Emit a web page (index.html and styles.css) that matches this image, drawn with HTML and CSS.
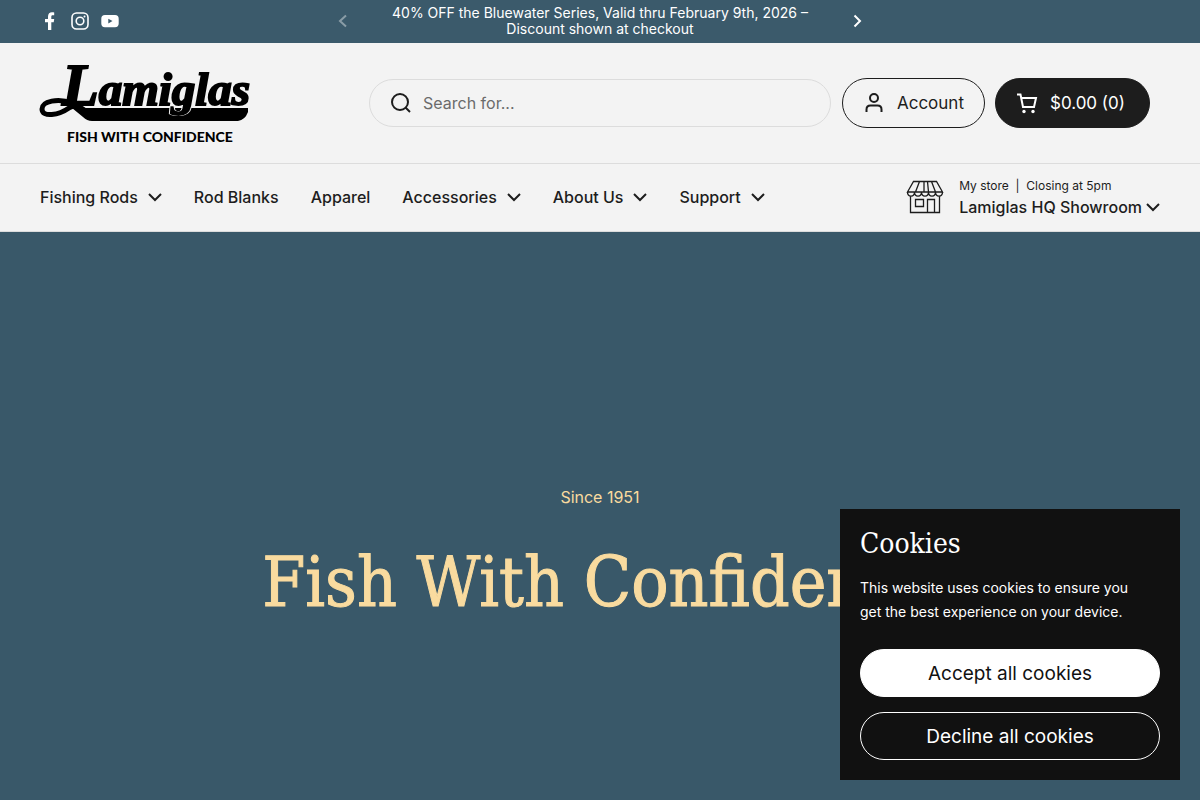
FILE: index.html
```html
<!DOCTYPE html>
<html lang="en">
<head>
    <meta charset="UTF-8">
    <meta name="viewport" content="width=device-width, initial-scale=1.0">
    <title>Lamiglas</title>
    <link rel="stylesheet" href="styles.css">
</head>
<body>
    <div class="announcement-bar">
        <div class="social">
            <a href="#" aria-label="Facebook">
                <svg width="20" height="20" viewBox="0 0 20 20" fill="currentColor"><path d="M8 19v-7.800H5V8h3V5.500C8 2.600 9.600 1.200 12 1.200c1 0 1.700.1 2.200.2v2.900h-1.600c-1 0-1.300.6-1.300 1.500V8h2.900l-.5 3.200h-2.400V19z"/></svg>
            </a>
            <a href="#" aria-label="Instagram">
                <svg width="20" height="20" viewBox="0 0 20 20" fill="none" stroke="currentColor" stroke-width="1.600"><rect x="2" y="2" width="16" height="16" rx="4.500"/><circle cx="10" cy="10" r="3.800"/><circle cx="14.500" cy="5.500" r="1" fill="currentColor" stroke="none"/></svg>
            </a>
            <a href="#" aria-label="YouTube">
                <svg width="20" height="20" viewBox="0 0 20 20" fill="currentColor"><path fill-rule="evenodd" d="M5 4h10c2.500 0 3.700 1.300 3.700 3.700v4.800c0 2.400-1.200 3.700-3.700 3.700H5c-2.500 0-3.700-1.300-3.700-3.700V7.700C1.300 5.300 2.500 4 5 4zm3.300 3.800v4.600l4.200-2.300z"/></svg>
            </a>
        </div>
        <div class="announcement">
            <button class="arrow" aria-label="Previous" disabled>
                <svg width="14" height="14" viewBox="0 0 14 14"><path d="M10 1.500L4 7l6 5.500"/></svg>
            </button>
            <p>40% OFF the Bluewater Series, Valid thru February 9th, 2026 – Discount shown at checkout</p>
            <button class="arrow" aria-label="Next">
                <svg width="14" height="14" viewBox="0 0 14 14"><path d="M4.500 1.500L10 7l-5.500 5.500"/></svg>
            </button>
        </div>
    </div>

    <header>
        <div class="header-top">
            <a href="#" class="logo">
                <svg width="210" height="82" viewBox="0 0 210 82">
                    <path d="M32 46H208v4q-3 8-10 9H52q-5 0-9-4z"/>
                    <text class="script" x="22" y="43"><tspan class="initial">L</tspan>amiglas</text>
                    <path class="swash" d="M32 41C18 36 2 39 2 47c0 9 17 6 27-1 8-5 14 1 21 6"/>
                    <text class="tagline" x="27" y="80">FISH WITH CONFIDENCE</text>
                </svg>
            </a>
            <form class="search">
                <svg width="22" height="22" viewBox="0 0 22 22"><circle cx="10" cy="10" r="8"/><path d="M15.500 15.500L20 20"/></svg>
                <input type="search" aria-label="Search" placeholder="Search for...">
            </form>
            <a href="#" class="pill account">
                <svg width="22" height="22" viewBox="0 0 22 22"><circle cx="11" cy="6" r="4"/><path d="M3.500 20v-2.500c0-2.500 1.500-4 4-4h7c2.500 0 4 1.500 4 4V20"/></svg>
                Account
            </a>
            <a href="#" class="pill cart">
                <svg width="22" height="22" viewBox="0 0 22 22"><path d="M1 2.500h3.500L7 15h11l2-9H5.500"/><circle class="wheel" cx="8" cy="19.500" r="1.700"/><circle class="wheel" cx="17" cy="19.500" r="1.700"/></svg>
                $0.00 (0)
            </a>
        </div>
        <div class="header-bottom">
            <nav>
                <a href="#">Fishing Rods <svg class="chevron" width="14" height="14" viewBox="0 0 14 14"><path d="M1 4l6 6 6-6"/></svg></a>
                <a href="#">Rod Blanks</a>
                <a href="#">Apparel</a>
                <a href="#">Accessories <svg class="chevron" width="14" height="14" viewBox="0 0 14 14"><path d="M1 4l6 6 6-6"/></svg></a>
                <a href="#">About Us <svg class="chevron" width="14" height="14" viewBox="0 0 14 14"><path d="M1 4l6 6 6-6"/></svg></a>
                <a href="#">Support <svg class="chevron" width="14" height="14" viewBox="0 0 14 14"><path d="M1 4l6 6 6-6"/></svg></a>
            </nav>
            <button class="store">
                <svg class="store-icon" width="38" height="34" viewBox="0 0 38 34">
                    <path d="M7.500 1.500h23l6 10.500h-35zM1.500 12c0 5.500 7 5.500 7 0 0 5.500 7 5.500 7 0 0 5.500 7 5.500 7 0 0 5.500 7 5.500 7 0 0 5.500 7 5.500 7 0M13.500 1.500L9.500 12M18 1.500V12M21.500 1.500l1 10.500M25.500 1.500l4 10.500M4.500 16v16.500h29V16M9.500 19.500h8v7h-8zM21.500 32.500v-13h7v13"/>
                </svg>
                <span class="store-text">
                    <span class="store-hours">My store &nbsp;|&nbsp; Closing at 5pm</span>
                    <span class="store-name">Lamiglas HQ Showroom <svg class="chevron" width="14" height="14" viewBox="0 0 14 14"><path d="M1 4l6 6 6-6"/></svg></span>
                </span>
            </button>
        </div>
    </header>

    <main class="hero">
        <p>Since 1951</p>
        <h1>Fish With Confidence</h1>
    </main>

    <div class="cookies" role="dialog" aria-labelledby="cookies-title">
        <h2 id="cookies-title">Cookies</h2>
        <p>This website uses cookies to ensure you get the best experience on your device.</p>
        <button class="accept">Accept all cookies</button>
        <button class="decline">Decline all cookies</button>
    </div>
</body>
</html>
```

FILE: styles.css
```css
* {
    box-sizing: border-box;
}
body {
    margin: 0;
    min-height: 100vh;
    display: flex;
    flex-direction: column;
    font-family: Inter, "Open Sans", sans-serif;
    font-size: 16px;
    color: #1d1d1d;
    background-color: #395869;
    overflow: hidden;
}
h1, h2, p {
    margin: 0;
    font-weight: normal;
}
a {
    color: inherit;
    text-decoration: none;
}
button {
    font: inherit;
    color: inherit;
    background: none;
    border: none;
    padding: 0;
    cursor: pointer;
}
svg {
    display: block;
    flex: none;
    overflow: visible;
}

/* Announcement bar */
.announcement-bar {
    display: grid;
    grid-template-columns: 1fr 528px 1fr;
    align-items: center;
    height: 43px;
    padding: 0 40px 2px;
    background-color: #3b5a6b;
    color: #fff;
}
.social {
    display: flex;
    gap: 10px;
}
.announcement {
    display: flex;
    align-items: center;
    justify-content: space-between;
}
.announcement p {
    width: 440px;
    font-size: 14px;
    line-height: 16px;
    text-align: center;
}
.arrow path {
    fill: none;
    stroke: currentColor;
    stroke-width: 2;
}
.arrow:disabled {
    opacity: 0.4;
}

/* Header */
header {
    background-color: #f3f3f3;
}
.header-top {
    display: flex;
    align-items: center;
    height: 120px;
    padding: 0 50px 0 40px;
}
.logo {
    margin-right: 119px;
}
.logo .swash {
    fill: none;
    stroke: #000;
    stroke-width: 5;
}
.logo .script {
    font-family: "Liberation Serif", serif;
    font-size: 47px;
    font-weight: bold;
    font-style: italic;
    stroke: #000;
    stroke-width: 2px;
    filter: drop-shadow(1px 0 #f3f3f3) drop-shadow(-1px 0 #f3f3f3);
}
.logo .initial {
    font-size: 60px;
}
.logo .tagline {
    font-family: Lato, sans-serif;
    font-size: 14px;
    font-weight: 900;
}
.search {
    flex: 1;
    display: flex;
    align-items: center;
    gap: 11px;
    height: 48px;
    margin-right: 11px;
    padding: 0 20px;
    border: 1px solid #dcdcdc;
    border-radius: 24px;
}
.search svg,
.pill svg {
    fill: none;
    stroke: currentColor;
    stroke-width: 2;
}
.search input {
    flex: 1;
    min-width: 0;
    padding: 0;
    border: none;
    outline: none;
    background: none;
    font: inherit;
}
.search input::placeholder {
    color: #6b6b6b;
}
.pill {
    display: flex;
    align-items: center;
    gap: 12px;
    height: 50px;
    padding: 0 20px;
    border: 1px solid #1d1d1d;
    border-radius: 25px;
    font-size: 17px;
}
.cart {
    margin-left: 10px;
    padding-right: 24px;
    background-color: #1d1d1d;
    color: #fff;
}
.pill .wheel {
    fill: currentColor;
    stroke: none;
}
.header-bottom {
    display: flex;
    align-items: center;
    justify-content: space-between;
    height: 69px;
    padding: 0 40px 2px;
    border-top: 1px solid #dcdcdc;
    border-bottom: 1px solid #dcdcdc;
    font-weight: 500;
}
nav {
    display: flex;
    gap: 32px;
}
nav a {
    display: flex;
    align-items: center;
    gap: 10px;
}
.chevron {
    fill: none;
    stroke: currentColor;
    stroke-width: 2;
}
.store {
    display: flex;
    align-items: center;
    gap: 15px;
    text-align: left;
}
.store-icon {
    fill: none;
    stroke: currentColor;
    stroke-width: 1.3;
}
.store-text {
    display: grid;
}
.store-hours {
    font-size: 12px;
    font-weight: normal;
    line-height: 20px;
}
.store-name {
    display: flex;
    align-items: center;
    gap: 4px;
    line-height: 22px;
}

/* Hero */
.hero {
    flex: 1;
    padding: 252px 40px 0;
    color: #f9db9f;
    text-align: center;
}
.hero p {
    line-height: 26px;
}
.hero h1 {
    margin-top: 32px;
    font-family: "DejaVu Serif Condensed", "DejaVu Serif", serif;
    font-size: 69px;
    line-height: 80px;
    -webkit-text-stroke: 1px;
}

/* Cookie banner */
.cookies {
    position: fixed;
    right: 20px;
    bottom: 20px;
    width: 340px;
    padding: 16px 20px 20px;
    background-color: #111;
    color: #fff;
}
.cookies h2 {
    font-family: "DejaVu Serif Condensed", "DejaVu Serif", serif;
    font-size: 28px;
    line-height: 38px;
}
.cookies p {
    margin: 13px 0 25px;
    padding-right: 20px;
    font-size: 14px;
    line-height: 24px;
}
.cookies button {
    display: block;
    width: 100%;
    height: 48px;
    border: 1px solid #fff;
    border-radius: 24px;
    font-size: 19px;
}
.cookies .accept {
    margin-bottom: 15px;
    background-color: #fff;
    color: #111;
}
```
